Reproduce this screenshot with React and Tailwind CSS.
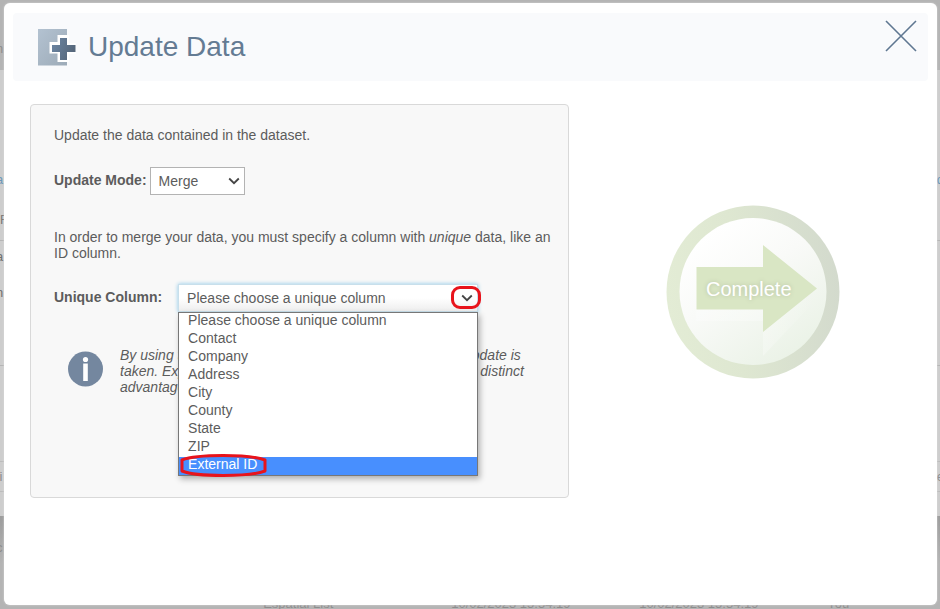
import React, { useState } from 'react';

const columns = [
    'Please choose a unique column',
    'Contact',
    'Company',
    'Address',
    'City',
    'County',
    'State',
    'ZIP',
    'External ID',
];

const Chevron = ({ className }) => (
    <svg viewBox="0 0 12 8" className={`pointer-events-none h-2 w-3 ${className}`} fill="none" stroke="#444" strokeWidth="1.8" aria-hidden="true">
        <path d="M1.2 1.5 6 6.2l4.8-4.7" />
    </svg>
);

const UpdateIcon = () => (
    <svg viewBox="0 0 38 38" className="h-[38px] w-[38px]" aria-hidden="true">
        <defs>
            <linearGradient id="sheet" x1="0" y1="0" x2="1" y2="1">
                <stop offset="0" stopColor="#b3c2d1" />
                <stop offset="1" stopColor="#9dabb8" />
            </linearGradient>
            <linearGradient id="plus" x1="0" y1="0" x2="1" y2="0.4">
                <stop offset="0" stopColor="#6c87a5" />
                <stop offset="1" stopColor="#56677b" />
            </linearGradient>
        </defs>
        <path fill="#fff" d="M19 7h12v8h8v11h-8v8H19v-8h-8V14h8z" />
        <path fill="url(#sheet)" d="M0 1h29v6h-9.500v7h-8v11.500h8v8.500H29v3.500H0z" />
        <path fill="url(#plus)" d="M22 10h7v7h8.500v7H29v8h-7v-8h-8v-7h8z" />
    </svg>
);

// dimmed page that sits under the dialog, only its edges show
const PageBehind = () => (
    <div className="absolute inset-0 flex flex-col overflow-hidden bg-[#b4b4b4] text-[13px] leading-4 text-[#8d8d8d]" aria-hidden="true">
        <div className="-ml-1 flex h-[70px] shrink-0 items-center pt-7">n</div>
        <div className="-mx-1 flex h-[171px] shrink-0 flex-col justify-end gap-6 border-b border-[#b5b5b5] bg-[#cdcdcd] pb-3">
            <div className="flex justify-between text-[#6c97b8]">
                <span>a</span>
                <span>d</span>
            </div>
            <span className="pl-1 text-[#777]">F</span>
        </div>
        <div className="-ml-1 flex h-[125px] shrink-0 flex-col gap-5 border-b border-[#b5b5b5] bg-[#cdcdcd] pt-2 text-[#6f6f6f]">
            <span>a</span>
            <span>n</span>
        </div>
        <div className="h-24 shrink-0 border-b border-[#bcbcbc] bg-[#cdcdcd]" />
        <div className="-mx-1 flex h-[30px] shrink-0 items-center justify-between border-b border-[#bcbcbc] bg-[#cdcdcd]">
            <span>ti</span>
            <span>e</span>
        </div>
        <div className="h-6 shrink-0 bg-[#cdcdcd]" />
        <div className="-ml-1 flex h-20 shrink-0 items-center bg-gradient-to-b from-[#9c9c9c] to-[#b4b4b4] to-60%">
            <span className="pb-4">c</span>
        </div>
        <div className="grid shrink-0 grid-cols-[28fr_20fr_20fr_20fr_12fr] whitespace-nowrap">
            <span />
            <span>Espatial List</span>
            <span>10/02/2023 15:54:19</span>
            <span>10/02/2023 15:54:19</span>
            <span>You</span>
        </div>
    </div>
);

const CompleteButton = () => (
    <button type="button" className="relative flex h-[174px] w-[174px] items-center justify-center">
        <svg viewBox="0 0 174 174" className="absolute inset-0 h-full w-full" aria-hidden="true">
            <defs>
                <linearGradient id="ring" x1="0" y1="0.55" x2="1" y2="0.45">
                    <stop offset="0" stopColor="#e3ecd5" />
                    <stop offset="0.4" stopColor="#dee7d1" />
                    <stop offset="1" stopColor="#d3dacd" />
                </linearGradient>
                <linearGradient id="disc" x1="0.2" y1="0.1" x2="0.8" y2="0.95">
                    <stop offset="0" stopColor="#ffffff" />
                    <stop offset="0.4" stopColor="#f9faf8" />
                    <stop offset="1" stopColor="#eaf2e6" />
                </linearGradient>
                <linearGradient id="shade" x1="1" y1="0" x2="0" y2="0">
                    <stop offset="0" stopColor="#ffffff" stopOpacity="0" />
                    <stop offset="0.45" stopColor="#ffffff" stopOpacity="0.35" />
                    <stop offset="1" stopColor="#ffffff" stopOpacity="0.3" />
                </linearGradient>
            </defs>
            <circle cx="87" cy="87" r="86.5" fill="url(#ring)" />
            <circle cx="87" cy="86.500" r="73.500" fill="url(#disc)" />
            <path fill="url(#shade)" d="M30 73h67V52l54 42-54 57v-35H30z" opacity="0.8" />
            <path fill="#d9e6c4" d="M30.500 62h66.500V40l54 43.500-54 43.500V104.500H30.500z" />
        </svg>
        <span className="relative pr-2 pb-1.5 text-xl text-white [text-shadow:0_0_4px_#b4bfa2]">Complete</span>
    </button>
);

const App = () => {
    const [mode, setMode] = useState('Merge');
    const [column, setColumn] = useState(columns[0]);
    const [hovered, setHovered] = useState('External ID');
    const [open, setOpen] = useState(true);

    const choose = (name) => {
        setColumn(name);
        setOpen(false);
    };

    return (
        <div className="relative flex min-h-screen flex-col pt-[3px] pr-[3px] pb-1 pl-1 font-['Liberation_Sans',Arial,sans-serif] text-sm leading-4 text-[#5c5c5c]">
            <PageBehind />
            <main role="dialog" aria-labelledby="title" className="relative flex-1 rounded-md bg-white pt-[10px] shadow-[0_0_2px_#ddd]">
                <header className="mx-[9px] flex h-[68px] items-center justify-between rounded bg-[#f9fafc] pr-[10px] pl-[25px]">
                    <div className="flex items-center gap-3">
                        <UpdateIcon />
                        <h1 id="title" className="text-[28px] leading-8 text-[#647b93]">Update Data</h1>
                    </div>
                    <button type="button" aria-label="Close" className="pb-[22px]">
                        <svg viewBox="0 0 34 34" className="h-[34px] w-[34px]" stroke="#5f7791" strokeWidth="1.6" aria-hidden="true">
                            <path d="M2 2l30 30M32 2 2 32" />
                        </svg>
                    </button>
                </header>

                <div className="grid grid-cols-[minmax(0,19fr)_minmax(0,13fr)] items-start pt-[23px] pl-[26px]">
                    <section className="rounded border border-[#d9d9d9] bg-[#f8f8f8] px-[15px] pt-[22px] pb-[102px] pl-[23px]">
                        <p>Update the data contained in the dataset.</p>

                        <div className="flex items-center gap-[3px] pt-6">
                            <label htmlFor="mode" className="pb-[2px] font-bold">Update Mode:</label>
                            <div className="relative">
                                <select
                                    id="mode"
                                    value={mode}
                                    onChange={(e) => setMode(e.target.value)}
                                    className="h-7 w-[95px] appearance-none border border-[#b3b3b3] bg-white px-2"
                                >
                                    <option>Merge</option>
                                    <option>Append</option>
                                    <option>Replace</option>
                                </select>
                                <Chevron className="absolute top-[10px] right-[5px]" />
                            </div>
                        </div>

                        <p className="pt-[34px]">
                            In order to merge your data, you must specify a column with <em>unique</em> data, like an ID column.
                        </p>

                        <div className="flex items-center gap-4 pt-[23px]">
                            <label htmlFor="column" className="pb-[2px] font-bold">Unique Column:</label>
                            <div className="relative">
                                <select
                                    id="column"
                                    value={column}
                                    onChange={(e) => setColumn(e.target.value)}
                                    onMouseDown={(e) => {
                                        e.preventDefault();
                                        setOpen(!open);
                                    }}
                                    className="h-7 w-[300px] appearance-none border border-[#c8dfeb] bg-gradient-to-b from-white from-50% to-[#eeeeee] px-2 shadow-[0_0_4px_#8cc8e8] outline-none"
                                >
                                    {columns.map((name) => (
                                        <option key={name}>{name}</option>
                                    ))}
                                </select>
                                <Chevron className="absolute top-[10px] right-[5px]" />
                                <span className="pointer-events-none absolute top-[2px] right-[-3px] h-[23px] w-[30px] rounded-[9px] border-3 border-[#e8141c]" />
                                {open && (
                                    <ul role="listbox" aria-label="Unique Column" className="absolute top-full left-0 z-10 w-full border border-[#777] bg-white shadow-[2px_3px_6px_rgba(0,0,0,0.3)]">
                                        {columns.map((name) => (
                                            <li
                                                key={name}
                                                role="option"
                                                aria-selected={name === hovered}
                                                onMouseEnter={() => setHovered(name)}
                                                onClick={() => choose(name)}
                                                className={`relative h-[18px] px-[9px] leading-[14px] ${name === hovered ? 'bg-[#488ffe] text-white' : ''}`}
                                            >
                                                {name}
                                                {name === 'External ID' && (
                                                    <svg viewBox="0 0 88 24" className="pointer-events-none absolute -top-1 left-0 h-6 w-[88px]" fill="none" stroke="#e8141c" strokeWidth="3" aria-hidden="true">
                                                        <path d="M3 7C18 1 70 1 86 7v11C70 24 18 24 3 18z" strokeLinejoin="round" />
                                                    </svg>
                                                )}
                                            </li>
                                        ))}
                                    </ul>
                                )}
                            </div>
                        </div>

                        <div className="flex items-start gap-4 pt-[35px] pl-[14px]">
                            <svg viewBox="0 0 36 36" className="mt-1 h-9 w-9 shrink-0" aria-hidden="true">
                                <circle cx="17.500" cy="18" r="17.500" fill="#74879f" />
                                <circle cx="17.500" cy="8.500" r="2.600" fill="#fff" />
                                <path fill="#fff" d="M15.200 12.500h4.600v17.500h-4.600z" />
                            </svg>
                            <p className="italic">
                                By using this feature, no backup of the data prior to the update is taken. Exporting your data before every update may have distinct advantages.
                            </p>
                        </div>
                    </section>

                    <div className="flex justify-center pt-[101px]">
                        <CompleteButton />
                    </div>
                </div>
            </main>
        </div>
    );
};

export default App;
